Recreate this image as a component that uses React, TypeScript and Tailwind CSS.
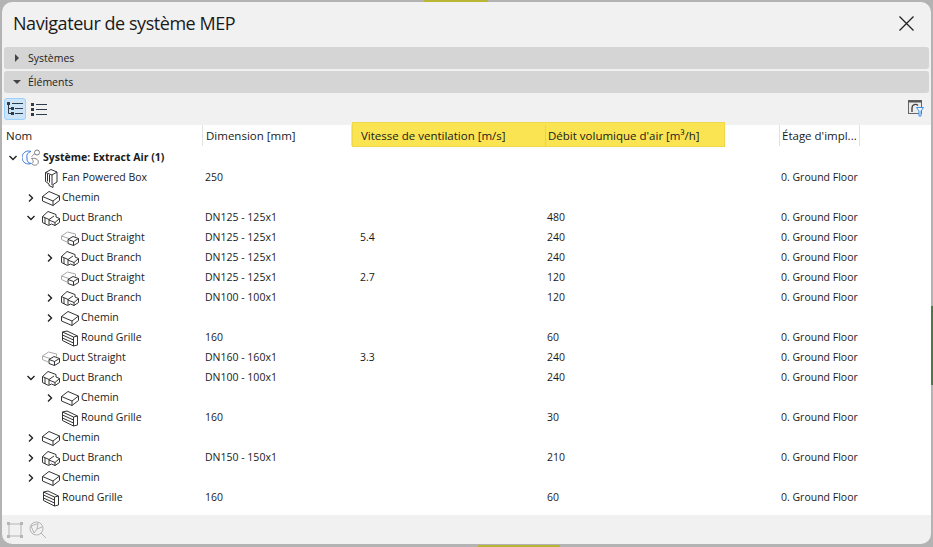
import React from "react";

const S = { fill: "none", stroke: "#333", strokeWidth: 1, strokeLinejoin: "round" as const };

function BoxIcon() {
  return (
    <svg width="20" height="17" viewBox="0 0 20 17" {...S}>
      <path d="M1.5 6.5 L8 1.5 L18.5 6 L18.5 10.5 L12 15.5 L1.5 11 Z" />
      <path d="M1.5 6.5 L12 11 L18.5 6 M12 11 L12 15.5" />
    </svg>
  );
}
function BranchIcon() {
  return (
    <svg width="20" height="17" viewBox="0 0 20 17" {...S}>
      <path d="M1.5 6.5 L7 1.5 L15 4.5 L15 7 L18.5 8.5 L18.5 12.5 L14 15.5 L10.5 14 L7.5 15.5 L1.5 12.5 Z" />
      <path d="M1.5 6.5 L8 9.5 L13 6 M8 9.5 L8 15 M8 10 L14 12.5 L18.5 8.5 M14 12.5 L14 15.5 M4 8 L4 14" />
    </svg>
  );
}
function StraightIcon() {
  return (
    <svg width="20" height="17" viewBox="0 0 20 17" fill="none" strokeLinejoin="round">
      <path d="M1.5 6 L7.5 2 L15.5 4 L15.5 6.5 M1.5 6 L1.5 9.5 L7 12 M1.5 6 L9 8.5" stroke="#a8a8a8" />
      <path d="M8 9.5 L13 6.5 L18.5 8.5 L18.5 12.5 L13.5 15.5 L8 13.5 Z M8 9.5 L13.5 11.5 L18.5 8.5 M13.5 11.5 L13.5 15.5" stroke="#333" />
    </svg>
  );
}
function GrilleIcon() {
  return (
    <svg width="20" height="17" viewBox="0 0 20 17" {...S}>
      <path d="M2.5 2 L7 1 L17.5 6 L17.5 15 L13.5 16 L2.5 10.5 Z" />
      <path d="M2.5 2 L13.5 7 L17.5 6 M13.5 7 L13.5 16 M2.5 5 L13.5 10 M2.5 8 L13.5 13" />
    </svg>
  );
}
function FanIcon() {
  return (
    <svg width="16" height="19" viewBox="0 0 16 19" {...S}>
      <path d="M2.5 3.5 L8 0.5 L14 3 L14 13 L10 15.5 L10 18.5 L6 16.5 L6 15 L2.5 12.5 Z" />
      <path d="M2.5 3.5 L9 6 L14 3 M9 6 L9 16 M4.5 5 L4.5 12.5 M6.5 6 L6.5 13.5" />
    </svg>
  );
}
function SystemIcon() {
  return (
    <svg width="20" height="18" viewBox="0 0 20 18" fill="none">
      <path d="M9 2.5 A6.5 6.5 0 1 0 9 14.5 A5 5 0 0 1 5 9 A5 5 0 0 1 9 2.5 Z" stroke="#3f78d8" />
      <circle cx="15" cy="3.5" r="2.5" stroke="#808080" />
      <path d="M9.5 7.5 C11 6.5 12 5.5 12.5 4.5 M9.5 9.5 C14 8.5 17.5 11 16 14.5 C14.5 17 11 16.5 9.5 14.5 C11 14 12.5 12.5 9.5 9.5 Z" stroke="#808080" />
    </svg>
  );
}
function TreeIcon() {
  return (
    <svg width="16" height="14" viewBox="0 0 16 14" fill="none">
      <rect x="0" y="0" width="3" height="3" fill="#2f3a4a" />
      <rect x="4" y="5" width="3" height="3" fill="#2f3a4a" />
      <rect x="4" y="10" width="3" height="3" fill="#2f3a4a" />
      <path d="M1.5 3 V11.5 H4 M1.5 6.5 H4" stroke="#2f3a4a" />
      <path d="M5 1.5 H16 M8 6.5 H16 M8 11.5 H16" stroke="#2f3a4a" />
    </svg>
  );
}
function ListIcon() {
  return (
    <svg width="16" height="13" viewBox="0 0 16 13" fill="none">
      <rect x="0" y="0" width="3" height="3" fill="#2f3a4a" />
      <rect x="0" y="5" width="3" height="3" fill="#2f3a4a" />
      <rect x="0" y="10" width="3" height="3" fill="#2f3a4a" />
      <path d="M5 1.5 H16 M5 6.5 H16 M5 11.5 H16" stroke="#2f3a4a" />
    </svg>
  );
}
function FilterIcon() {
  return (
    <svg width="16" height="17" viewBox="0 0 16 17" fill="none">
      <rect x="0.5" y="0.5" width="13" height="13" stroke="#666" fill="#ececec" />
      <path d="M0.5 1.5 H13.5" stroke="#555" strokeWidth="2" />
      <path d="M4 12 V8 A3.5 3.5 0 0 1 10 5.5" stroke="#444" strokeWidth="1.4" />
      <path d="M8.5 7.5 H15.5 L13 11 V16 H11 V11 Z" stroke="#3f8ee8" fill="#f4f8ff" strokeLinejoin="round" />
    </svg>
  );
}
function Chevron({ open }: { open: boolean }) {
  return (
    <svg width="10" height="10" viewBox="0 0 10 10" fill="none" stroke="#222" strokeWidth="1.4">
      {open ? <path d="M1.5 3 L5 6.5 L8.5 3" /> : <path d="M3 1.5 L6.5 5 L3 8.5" />}
    </svg>
  );
}

type Kind = "box" | "branch" | "straight" | "grille" | "fan";
const icons: Record<Kind, React.ReactElement> = {
  box: <BoxIcon />,
  branch: <BranchIcon />,
  straight: <StraightIcon />,
  grille: <GrilleIcon />,
  fan: <FanIcon />,
};

type Row = {
  level: number;
  kind: Kind;
  name: string;
  chev?: "open" | "closed";
  dim?: string;
  vit?: string;
  deb?: string;
  floor?: boolean;
};

const rows: Row[] = [
  { level: 1, kind: "fan", name: "Fan Powered Box", dim: "250", floor: true },
  { level: 1, kind: "box", name: "Chemin", chev: "closed" },
  { level: 1, kind: "branch", name: "Duct Branch", chev: "open", dim: "DN125 - 125x1", deb: "480", floor: true },
  { level: 2, kind: "straight", name: "Duct Straight", dim: "DN125 - 125x1", vit: "5.4", deb: "240", floor: true },
  { level: 2, kind: "branch", name: "Duct Branch", chev: "closed", dim: "DN125 - 125x1", deb: "240", floor: true },
  { level: 2, kind: "straight", name: "Duct Straight", dim: "DN125 - 125x1", vit: "2.7", deb: "120", floor: true },
  { level: 2, kind: "branch", name: "Duct Branch", chev: "closed", dim: "DN100 - 100x1", deb: "120", floor: true },
  { level: 2, kind: "box", name: "Chemin", chev: "closed" },
  { level: 2, kind: "grille", name: "Round Grille", dim: "160", deb: "60", floor: true },
  { level: 1, kind: "straight", name: "Duct Straight", dim: "DN160 - 160x1", vit: "3.3", deb: "240", floor: true },
  { level: 1, kind: "branch", name: "Duct Branch", chev: "open", dim: "DN100 - 100x1", deb: "240", floor: true },
  { level: 2, kind: "box", name: "Chemin", chev: "closed" },
  { level: 2, kind: "grille", name: "Round Grille", dim: "160", deb: "30", floor: true },
  { level: 1, kind: "box", name: "Chemin", chev: "closed" },
  { level: 1, kind: "branch", name: "Duct Branch", chev: "closed", dim: "DN150 - 150x1", deb: "210", floor: true },
  { level: 1, kind: "box", name: "Chemin", chev: "closed" },
  { level: 1, kind: "grille", name: "Round Grille", dim: "160", deb: "60", floor: true },
];

function Section({ open, label }: { open: boolean; label: string }) {
  return (
    <div className="h-[22px] rounded-[3px] bg-[#d5d5d5] flex items-center pl-[9px] gap-[7px] text-[10.5px] text-[#222]">
      <svg width="8" height="8" viewBox="0 0 8 8" fill="#444">
        {open ? <path d="M0 2 H8 L4 6 Z" /> : <path d="M2 0 V8 L6 4 Z" />}
      </svg>
      <span className="pt-[1px]">{label}</span>
    </div>
  );
}

function HeaderCell({ w, label, hl }: { w: string; label: React.ReactNode; hl?: boolean }) {
  return (
    <div className={`${w} h-[21px] flex items-center border-r ${hl ? "border-[#ebd24e]" : "border-[#e2e2e2]"} shrink-0 whitespace-nowrap`}>
      {label}
    </div>
  );
}

export default function App() {
  return (
    <div className="relative w-[933px] h-[547px] bg-[#b3b3b3] overflow-hidden" style={{ fontFamily: '"Open Sans", "Noto Sans", sans-serif' }}>
      <div className="absolute left-[424px] top-0 w-[64px] h-[2px] bg-[#b9b535]" />
      <div className="absolute right-0 top-[306px] w-[2px] h-[79px] bg-[#4a7a4a]" />
      <div className="absolute left-[2px] top-[2px] w-[929px] h-[542px] bg-[#f1f1f1] rounded-[10px] overflow-hidden flex flex-col">
        <div className="h-[45px] shrink-0 flex items-center justify-between pl-[11px] pr-[17px] pb-[3px]">
          <span className="text-[18px] tracking-[-0.45px] text-[#1a1a1a]">Navigateur de système MEP</span>
          <svg width="15" height="15" viewBox="0 0 15 15" stroke="#222" strokeWidth="1.3">
            <path d="M0.5 0.5 L14.5 14.5 M14.5 0.5 L0.5 14.5" />
          </svg>
        </div>
        <div className="flex flex-col gap-[2px] px-[2px] shrink-0">
          <Section open={false} label="Systèmes" />
          <Section open label="Éléments" />
        </div>
        <div className="h-[32px] shrink-0 flex items-center pl-[2px] pr-[7px]">
          <div className="w-[22px] h-[22px] rounded-[3px] bg-[#cce4f7] border border-[#99d1ff] flex items-center justify-center">
            <TreeIcon />
          </div>
          <div className="w-[22px] h-[22px] ml-[2px] flex items-center justify-center">
            <ListIcon />
          </div>
          <div className="ml-auto -mt-[2px]">
            <FilterIcon />
          </div>
        </div>
        <div className="flex-1 bg-white text-[10.5px] text-[#1a1a1a] min-h-0">
          <div className="relative h-[21px] flex text-[11.5px]">
            <div className="absolute left-[350px] top-[-3px] w-[373px] h-[25px] bg-[#fbe451] border border-[#efd84a]" />
            <div className="relative flex">
              <HeaderCell w="w-[201px] pl-[4px]" label="Nom" />
              <HeaderCell w="w-[149px] pl-[3px]" label="Dimension [mm]" />
              <HeaderCell w="w-[194px] pl-[9px]" label="Vitesse de ventilation [m/s]" hl />
              <HeaderCell w="w-[234px] pl-[2px]" label={<span>Débit volumique d'air [m³/h]</span>} />
              <HeaderCell w="w-[80px] pl-[2px]" label="Étage d'impl..." />
            </div>
          </div>
          <div className="flex items-center h-[20px] font-bold pl-[5px] mt-[2px]">
            <span className="w-[11px] flex justify-center"><Chevron open /></span>
            <span className="ml-[4px] w-[20px] flex justify-center"><SystemIcon /></span>
            <span className="ml-[1px]">Système: Extract Air (1)</span>
          </div>
          {rows.map((r, i) => (
            <div key={i} className="flex items-center h-[20px]">
              <div className="w-[201px] shrink-0 flex items-center">
                <span className="w-[23px] shrink-0" />
                {r.level === 2 && <span className="w-[19px] shrink-0" />}
                <span className="w-[11px] flex justify-center shrink-0">
                  {r.chev && <Chevron open={r.chev === "open"} />}
                </span>
                <span className="ml-[5px] w-[20px] flex justify-center shrink-0">{icons[r.kind]}</span>
                <span className="ml-[1px] whitespace-nowrap">{r.name}</span>
              </div>
              <div className="w-[155px] pl-[2px] shrink-0">{r.dim}</div>
              <div className="w-[187px] pl-[2px] shrink-0">{r.vit}</div>
              <div className="w-[234px] pl-[2px] shrink-0">{r.deb}</div>
              <div className="shrink-0 pl-[2px]">{r.floor ? "0. Ground Floor" : ""}</div>
            </div>
          ))}
        </div>
        <div className="h-[29px] shrink-0 flex items-center pl-[5px] gap-[6px]">
          <svg width="16" height="16" viewBox="0 0 16 16" fill="none" stroke="#b5b5b5">
            <rect x="2" y="2" width="12" height="12" />
            <g fill="#b5b5b5" stroke="none">
              <rect x="0" y="0" width="3" height="3" /><rect x="13" y="0" width="3" height="3" />
              <rect x="0" y="13" width="3" height="3" /><rect x="13" y="13" width="3" height="3" />
            </g>
          </svg>
          <svg width="18" height="18" viewBox="0 0 18 18" fill="none" stroke="#b5b5b5">
            <circle cx="7.5" cy="7.5" r="6.5" />
            <path d="M2 5 L9 2.5 L8 8 L5 12 Z M8 8 L13 6 M12 12 L17 17" />
          </svg>
        </div>
      </div>
      <div className="absolute left-[478px] bottom-0 w-[82px] h-[2px] bg-[#b9b535]" />
    </div>
  );
}
